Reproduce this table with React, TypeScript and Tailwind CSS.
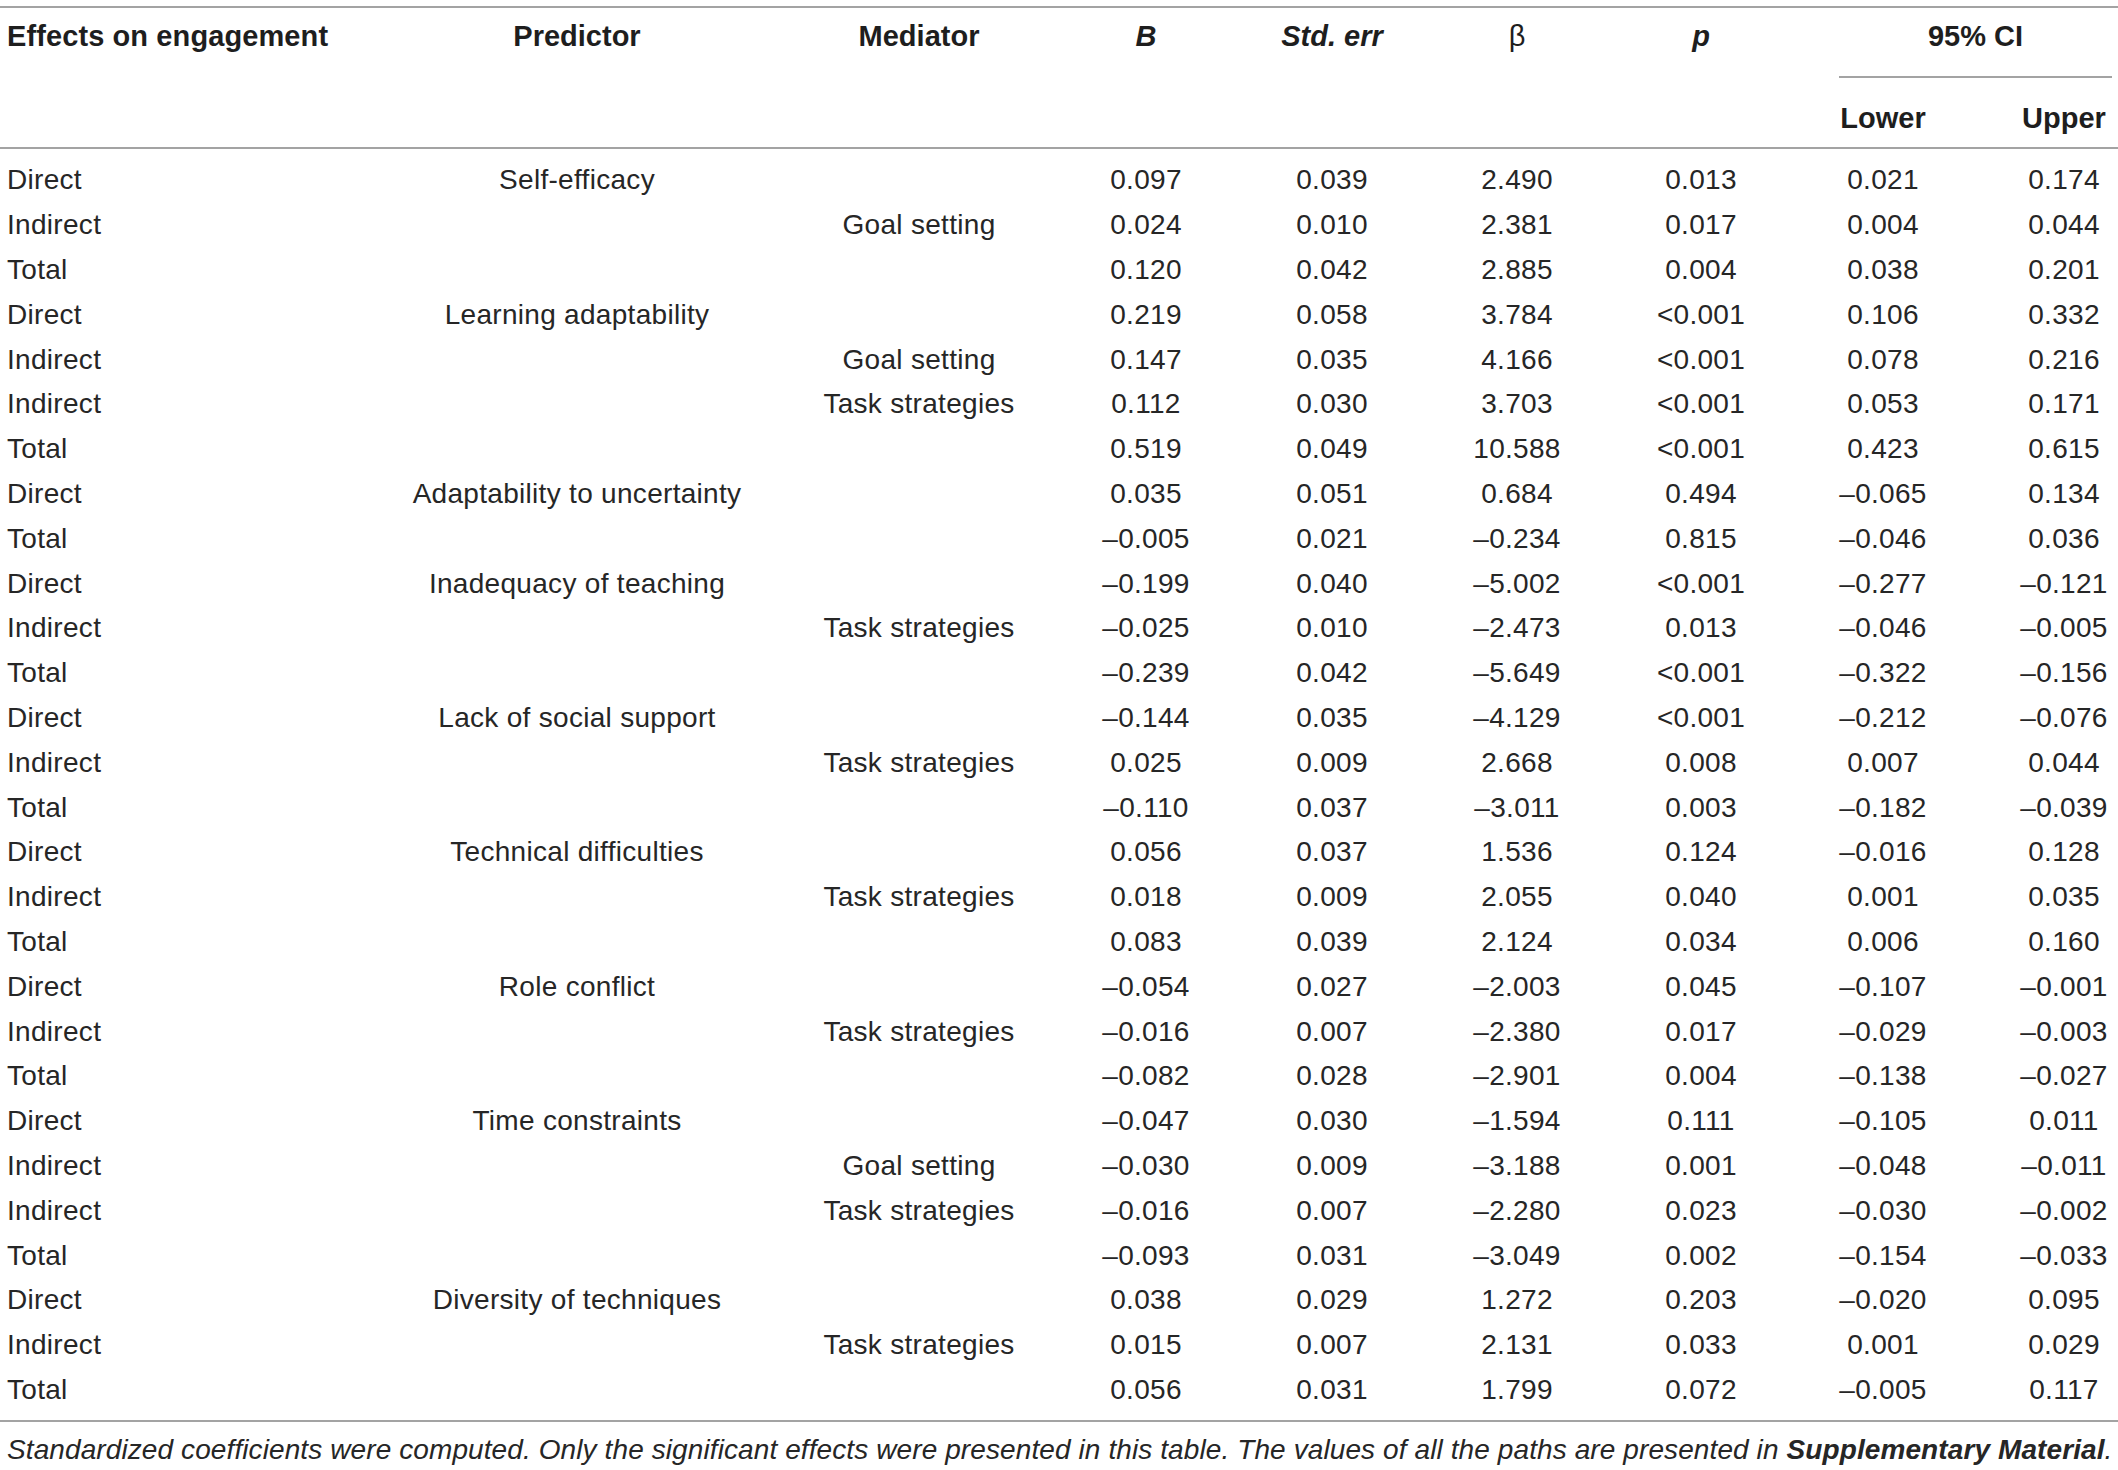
import React from "react";

const M = "\u2013";

const rows: string[][] = [
  ["Direct", "Self-efficacy", "", "0.097", "0.039", "2.490", "0.013", "0.021", "0.174"],
  ["Indirect", "", "Goal setting", "0.024", "0.010", "2.381", "0.017", "0.004", "0.044"],
  ["Total", "", "", "0.120", "0.042", "2.885", "0.004", "0.038", "0.201"],
  ["Direct", "Learning adaptability", "", "0.219", "0.058", "3.784", "<0.001", "0.106", "0.332"],
  ["Indirect", "", "Goal setting", "0.147", "0.035", "4.166", "<0.001", "0.078", "0.216"],
  ["Indirect", "", "Task strategies", "0.112", "0.030", "3.703", "<0.001", "0.053", "0.171"],
  ["Total", "", "", "0.519", "0.049", "10.588", "<0.001", "0.423", "0.615"],
  ["Direct", "Adaptability to uncertainty", "", "0.035", "0.051", "0.684", "0.494", M + "0.065", "0.134"],
  ["Total", "", "", M + "0.005", "0.021", M + "0.234", "0.815", M + "0.046", "0.036"],
  ["Direct", "Inadequacy of teaching", "", M + "0.199", "0.040", M + "5.002", "<0.001", M + "0.277", M + "0.121"],
  ["Indirect", "", "Task strategies", M + "0.025", "0.010", M + "2.473", "0.013", M + "0.046", M + "0.005"],
  ["Total", "", "", M + "0.239", "0.042", M + "5.649", "<0.001", M + "0.322", M + "0.156"],
  ["Direct", "Lack of social support", "", M + "0.144", "0.035", M + "4.129", "<0.001", M + "0.212", M + "0.076"],
  ["Indirect", "", "Task strategies", "0.025", "0.009", "2.668", "0.008", "0.007", "0.044"],
  ["Total", "", "", M + "0.110", "0.037", M + "3.011", "0.003", M + "0.182", M + "0.039"],
  ["Direct", "Technical difficulties", "", "0.056", "0.037", "1.536", "0.124", M + "0.016", "0.128"],
  ["Indirect", "", "Task strategies", "0.018", "0.009", "2.055", "0.040", "0.001", "0.035"],
  ["Total", "", "", "0.083", "0.039", "2.124", "0.034", "0.006", "0.160"],
  ["Direct", "Role conflict", "", M + "0.054", "0.027", M + "2.003", "0.045", M + "0.107", M + "0.001"],
  ["Indirect", "", "Task strategies", M + "0.016", "0.007", M + "2.380", "0.017", M + "0.029", M + "0.003"],
  ["Total", "", "", M + "0.082", "0.028", M + "2.901", "0.004", M + "0.138", M + "0.027"],
  ["Direct", "Time constraints", "", M + "0.047", "0.030", M + "1.594", "0.111", M + "0.105", "0.011"],
  ["Indirect", "", "Goal setting", M + "0.030", "0.009", M + "3.188", "0.001", M + "0.048", M + "0.011"],
  ["Indirect", "", "Task strategies", M + "0.016", "0.007", M + "2.280", "0.023", M + "0.030", M + "0.002"],
  ["Total", "", "", M + "0.093", "0.031", M + "3.049", "0.002", M + "0.154", M + "0.033"],
  ["Direct", "Diversity of techniques", "", "0.038", "0.029", "1.272", "0.203", M + "0.020", "0.095"],
  ["Indirect", "", "Task strategies", "0.015", "0.007", "2.131", "0.033", "0.001", "0.029"],
  ["Total", "", "", "0.056", "0.031", "1.799", "0.072", M + "0.005", "0.117"],
];

const grid = "grid grid-cols-[332px_490px_194px_260px_112px_258px_110px_254px_108px]";

export default function App() {
  return (
    <div
      className="w-[2118px] bg-white text-[#262626]"
      style={{ fontFamily: '"Liberation Sans", Arial, sans-serif' }}
    >
      <div className="pt-[6px]">
        <div className="h-[2px] bg-[#a3a3a3]" />
      </div>

      {/* header */}
      <div className={`${grid} h-[139px] text-[29px] font-bold text-[#1e1e1e]`}>
        <div className="pt-[10px] pl-[7px] leading-[36px] whitespace-nowrap tracking-[0.1px]">Effects on engagement</div>
        <div className="pt-[10px] text-center leading-[36px]">Predictor</div>
        <div className="pt-[10px] text-center leading-[36px]">Mediator</div>
        <div className="pt-[10px] text-center leading-[36px] italic">B</div>
        <div className="pt-[10px] text-center leading-[36px] italic whitespace-nowrap">Std. err</div>
        <div className="pt-[10px] text-center leading-[36px] font-normal">β</div>
        <div className="pt-[10px] text-center leading-[36px] italic">p</div>
        <div className="col-span-2 flex flex-col pt-[10px]">
          <div className="ml-[83px] mr-[6px] text-center leading-[36px]">95% CI</div>
          <div className="ml-[83px] mr-[6px] mt-[22px] h-[2px] bg-[#a3a3a3]" />
          <div className="mt-[22px] grid grid-cols-[254px_108px] leading-[36px]">
            <div className="text-center">Lower</div>
            <div className="text-center">Upper</div>
          </div>
        </div>
      </div>
      <div className="h-[2px] bg-[#a3a3a3]" />

      {/* body */}
      <div className="pt-[9px] pb-[8px] text-[28px] tracking-[0.3px]">
        {rows.map((r, i) => (
          <div key={i} className={`${grid} h-[44.8px] items-center whitespace-nowrap`}>
            <div className="pl-[7px]">{r[0]}</div>
            <div className="text-center">{r[1]}</div>
            <div className="text-center">{r[2]}</div>
            <div className="text-center">{r[3]}</div>
            <div className="text-center">{r[4]}</div>
            <div className="text-center">{r[5]}</div>
            <div className="text-center">{r[6]}</div>
            <div className="text-center">{r[7]}</div>
            <div className="text-center">{r[8]}</div>
          </div>
        ))}
      </div>
      <div className="h-[2px] bg-[#a3a3a3]" />

      <div className="pl-[7px] pt-[8px] text-[28px] italic leading-[40px] whitespace-nowrap tracking-[0.1px]">
        Standardized coefficients were computed. Only the significant effects were presented in this table. The values
        of all the paths are presented in <span className="font-bold">Supplementary Material</span>.
      </div>
    </div>
  );
}
